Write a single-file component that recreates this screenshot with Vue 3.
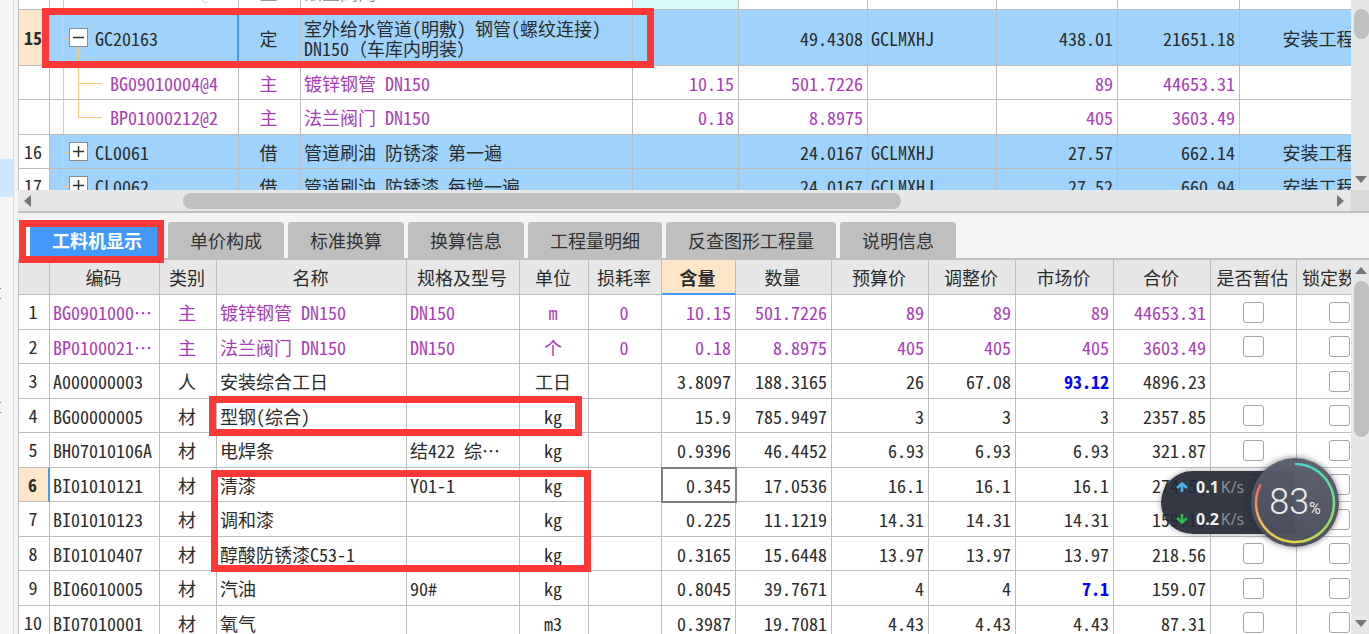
<script setup>
const quotaRows = [
  { no: '', kind: 'muted', level: 1, code: 'BP01000212@1', type: '主', name: ['法兰阀门 DN150'], content: '0', qty: '0', expr: '', price: '405', total: '0', fee: '' },
  { no: '15', kind: 'parent current', level: 0, sign: 'minus', code: 'GC20163', type: '定', name: ['室外给水管道(明敷) 钢管(螺纹连接)', 'DN150（车库内明装）'], content: '', qty: '49.4308', expr: 'GCLMXHJ', price: '438.01', total: '21651.18', fee: '安装工程' },
  { no: '', kind: 'material', level: 1, code: 'BG09010004@4', type: '主', name: ['镀锌钢管 DN150'], content: '10.15', qty: '501.7226', expr: '', price: '89', total: '44653.31', fee: '' },
  { no: '', kind: 'material last', level: 1, code: 'BP01000212@2', type: '主', name: ['法兰阀门 DN150'], content: '0.18', qty: '8.8975', expr: '', price: '405', total: '3603.49', fee: '' },
  { no: '16', kind: 'parent', level: 0, sign: 'plus', code: 'CL0061', type: '借', name: ['管道刷油 防锈漆 第一遍'], content: '', qty: '24.0167', expr: 'GCLMXHJ', price: '27.57', total: '662.14', fee: '安装工程' },
  { no: '17', kind: 'parent', level: 0, sign: 'plus', code: 'CL0062', type: '借', name: ['管道刷油 防锈漆 每增一遍'], content: '', qty: '24.0167', expr: 'GCLMXHJ', price: '27.52', total: '660.94', fee: '安装工程' },
]

const tabs = ['工料机显示', '单价构成', '标准换算', '换算信息', '工程量明细', '反查图形工程量', '说明信息']

const headers = ['', '编码', '类别', '名称', '规格及型号', '单位', '损耗率', '含量', '数量', '预算价', '调整价', '市场价', '合价', '是否暂估', '锁定数量']

const resources = [
  ['BG0901000⋯', '主', '镀锌钢管 DN150', 'DN150', 'm', '0', '10.15', '501.7226', '89', '89', '89', '44653.31'],
  ['BP0100021⋯', '主', '法兰阀门 DN150', 'DN150', '个', '0', '0.18', '8.8975', '405', '405', '405', '3603.49'],
  ['A000000003', '人', '安装综合工日', '', '工日', '', '3.8097', '188.3165', '26', '67.08', '93.12', '4896.23'],
  ['BG00000005', '材', '型钢(综合)', '', 'kg', '', '15.9', '785.9497', '3', '3', '3', '2357.85'],
  ['BH07010106A', '材', '电焊条', '结422 综⋯', 'kg', '', '0.9396', '46.4452', '6.93', '6.93', '6.93', '321.87'],
  ['BI01010121', '材', '清漆', 'Y01-1', 'kg', '', '0.345', '17.0536', '16.1', '16.1', '16.1', '274.56'],
  ['BI01010123', '材', '调和漆', '', 'kg', '', '0.225', '11.1219', '14.31', '14.31', '14.31', '159.15'],
  ['BI01010407', '材', '醇酸防锈漆C53-1', '', 'kg', '', '0.3165', '15.6448', '13.97', '13.97', '13.97', '218.56'],
  ['BI06010005', '材', '汽油', '90#', 'kg', '', '0.8045', '39.7671', '4', '4', '7.1', '159.07'],
  ['BI07010001', '材', '氧气', '', 'm3', '', '0.3987', '19.7081', '4.43', '4.43', '4.43', '87.31'],
]

const alignOf = (i) => ([1, 4, 5].includes(i) ? 'c' : i > 5 ? 'r' : 'l')
const edited = (r, i) => i === 10 && (r[0] === 'A000000003' || r[0] === 'BI06010005')

// Full-width brackets and the ellipsis keep their full cell, everything else Latin is half width
const runs = (text) => text.split(/([（）⋯])/).filter(Boolean).map((s) => ({ s, wide: /[（）⋯]/.test(s) }))

const stops = [[72, 214, 205], [90, 222, 160], [150, 220, 100], [228, 216, 72], [250, 190, 80], [250, 100, 90]]
const SEG = 40
const arcs = Array.from({ length: SEG }, (_, i) => {
  const sweep = 298
  const at = (deg) => {
    const a = (deg - 90) * Math.PI / 180
    return (45 + 39 * Math.cos(a)).toFixed(2) + ' ' + (45 + 39 * Math.sin(a)).toFixed(2)
  }
  const t = i / (SEG - 1) * (stops.length - 1)
  const k = Math.min(Math.floor(t), stops.length - 2)
  const c = stops[k].map((v, n) => Math.round(v + (stops[k + 1][n] - v) * (t - k)))
  return { d: `M${at(i * sweep / SEG)} A39 39 0 0 1 ${at((i + 1) * sweep / SEG + 0.5)}`, stroke: `rgb(${c.join(',')})` }
})
</script>

<template>
  <div class="app" lang="zh-CN">
    <aside class="rail">
      <i class="picked"></i>
      <i class="tick first"></i>
      <i class="tick second"></i>
    </aside>
    <main class="main">
      <section class="pane top-pane">
        <div class="viewport">
          <table class="grid quota">
            <colgroup>
              <col class="w31"><col class="w189"><col class="w62"><col><col class="w106"><col class="w129"><col class="w129"><col class="w121"><col class="w122"><col class="w160">
            </colgroup>
            <tbody>
              <tr v-for="(r, i) in quotaRows" :key="i" :class="r.kind">
                <td class="num">{{ r.no }}</td>
                <td class="code" :class="r.level ? 'child' : 'root'">
                  <i class="trunk"></i>
                  <i class="stem"></i>
                  <button v-if="r.sign" class="toggle" type="button" :aria-label="r.sign === 'plus' ? '展开' : '折叠'">
                    <svg width="19" height="19" viewBox="0 0 19 19">
                      <path d="M4 9.5H15" />
                      <path v-if="r.sign === 'plus'" d="M9.5 4V15" />
                    </svg>
                  </button>{{ r.code }}
                </td>
                <td class="c">{{ r.type }}</td>
                <td class="l">
                  <div v-for="n in r.name" :key="n"><span v-for="(p, k) in runs(n)" :key="k" :class="{ wide: p.wide }">{{ p.s }}</span></div>
                </td>
                <td class="r content">{{ r.content }}</td>
                <td class="r">{{ r.qty }}</td>
                <td class="l">{{ r.expr }}</td>
                <td class="r">{{ r.price }}</td>
                <td class="r">{{ r.total }}</td>
                <td class="c">{{ r.fee }}</td>
              </tr>
            </tbody>
          </table>
        </div>
        <div class="vbar">
          <i class="thumb upper"></i>
          <svg class="arrow" width="12" height="7" viewBox="0 0 12 7"><path d="M0 0H12L6 7Z" /></svg>
        </div>
      </section>

      <div class="hbar">
        <svg width="7" height="12" viewBox="0 0 7 12"><path d="M7 0V12L0 6Z" /></svg>
        <div class="htrack"><i class="hthumb"></i></div>
        <svg width="7" height="12" viewBox="0 0 7 12"><path d="M0 0V12L7 6Z" /></svg>
        <i class="corner"></i>
      </div>

      <nav class="tabs" role="tablist">
        <button v-for="(t, i) in tabs" :key="t" type="button" role="tab" class="tab" :class="{ active: i === 0 }" :aria-selected="i === 0">{{ t }}</button>
      </nav>

      <section class="pane bottom-pane">
        <div class="viewport">
          <table class="grid res">
            <colgroup>
              <col class="w31"><col class="w110"><col class="w57"><col><col class="w113"><col class="w69"><col class="w73"><col class="w74"><col class="w96"><col class="w97"><col class="w87"><col class="w98"><col class="w97"><col class="w86"><col class="w85">
            </colgroup>
            <thead>
              <tr><th v-for="(h, i) in headers" :key="i" :class="{ hot: h === '含量' }">{{ h }}</th></tr>
            </thead>
            <tbody>
              <tr v-for="(r, n) in resources" :key="n" :class="{ material: n < 2 }">
                <td class="num" :class="{ now: n === 5 }">{{ n + 1 }}</td>
                <td v-for="(v, i) in r" :key="i" :class="[alignOf(i), { edited: edited(r, i), focus: n === 5 && i === 6 }]"><span v-for="(p, k) in runs(v)" :key="k" :class="{ wide: p.wide }">{{ p.s }}</span></td>
                <td class="check"><input v-if="n !== 2" type="checkbox" :aria-label="'是否暂估 ' + (n + 1)"></td>
                <td class="check"><input type="checkbox" :aria-label="'锁定数量 ' + (n + 1)"></td>
              </tr>
            </tbody>
          </table>
        </div>
        <div class="vbar">
          <svg class="arrow" width="12" height="7" viewBox="0 0 12 7"><path d="M0 7H12L6 0Z" /></svg>
          <i class="thumb lower"></i>
          <svg class="arrow" width="12" height="7" viewBox="0 0 12 7"><path d="M0 0H12L6 7Z" /></svg>
        </div>
      </section>
    </main>

    <i class="mark m1"></i>
    <i class="mark m2"></i>
    <i class="mark m3"></i>
    <i class="mark m4"></i>

    <div class="speed">
      <div class="pill">
        <p>
          <svg width="12" height="10" viewBox="0 0 12 10" stroke="#4ab4f4"><path d="M6 10V2M1 6L6 1.5L11 6" /></svg>
          <b>0.1</b><span>K/s</span>
        </p>
        <p>
          <svg width="12" height="10" viewBox="0 0 12 10" stroke="#2db84b"><path d="M6 0V8M1 4L6 8.5L11 4" /></svg>
          <b>0.2</b><span>K/s</span>
        </p>
      </div>
      <div class="dial">
        <svg class="ring" width="90" height="90" viewBox="0 0 90 90">
          <path v-for="(a, i) in arcs" :key="i" :d="a.d" :stroke="a.stroke" />
        </svg>
        <span class="value">83</span><span class="unit">%</span>
      </div>
    </div>
  </div>
</template>

<style>
body { margin: 0; overflow: hidden; }
</style>

<style scoped>
.app {
  position: relative;
  display: flex;
  height: 100vh;
  overflow: hidden;
  background: #f4f4f4;
  color: #2b2b2b;
  font-family: "Noto Sans CJK SC", "Liberation Mono", sans-serif;
  font-size: 18px;
  line-height: 20px;
}
i { display: block; }
button { font: inherit; color: inherit; border: 0; padding: 0; }

.rail {
  position: relative;
  flex: none;
  box-sizing: border-box;
  width: 14px;
  margin-right: 4px;
  border-right: 1px solid #dadada;
}
.picked { margin-top: 159px; height: 38px; background: #cce8ff; }
.tick { width: 1px; height: 9px; border: solid #4a90d9; border-width: 1px 0; }
.tick.first { margin-top: 91px; }
.tick.second { margin-top: 103px; }

.main { flex: 1; min-width: 0; display: flex; flex-direction: column; }
.pane { display: flex; min-height: 0; }
.top-pane { flex: 0 0 30vh; }
.bottom-pane { flex: 1; }
.viewport {
  flex: 1;
  min-width: 0;
  overflow: hidden;
  border-left: 1px solid #bdbdbd;
  background: #fff;
}

.grid { table-layout: fixed; border-collapse: separate; border-spacing: 0; font-feature-settings: "hwid"; }
.wide { font-feature-settings: normal; }
.quota { width: calc(100% + 49px); margin-top: -25px; }
.res { width: calc(100% + 31px); }
.w31 { width: 31px; } .w57 { width: 57px; } .w62 { width: 62px; } .w69 { width: 69px; }
.w73 { width: 73px; } .w74 { width: 74px; } .w85 { width: 85px; } .w86 { width: 86px; }
.w87 { width: 87px; } .w96 { width: 96px; } .w97 { width: 97px; } .w98 { width: 98px; }
.w106 { width: 106px; } .w110 { width: 110px; } .w113 { width: 113px; } .w121 { width: 121px; }
.w122 { width: 122px; } .w129 { width: 129px; } .w160 { width: 160px; } .w189 { width: 189px; }

td, th {
  box-sizing: border-box;
  height: 35px;
  padding: 0 3px;
  border: solid #bdbdbd;
  border-width: 0 1px 1px 0;
  white-space: nowrap;
  overflow: hidden;
  vertical-align: middle;
  font-weight: 400;
}
tbody tr:nth-child(even) td { height: 34px; }
.quota tr:nth-child(odd) td { height: 34px; }
.quota tr:nth-child(1) td { height: 35px; }
.quota tr:nth-child(4) td { height: 35px; }
.quota tr:nth-child(2) td { height: 56px; }
.l { text-align: left; }
.c { text-align: center; padding: 0 3px 0 1px; }
.r { text-align: right; padding-right: 4px; }
.num { text-align: center; padding: 0 2px 2px 0; background: #fff; }
th { background: #e7e7e7; padding: 0 2px 0 0; text-align: center; }
th.hot { background: #ffe6c8; font-weight: 700; border-bottom: 2px solid #4499ff; }

.material td { color: #a83cba; }
.material td.num { color: #2b2b2b; }
.muted td { color: #999; }
.muted .code { color: #ddd; }
.muted .content { background: #d9f8f8; }
.parent td { background: #a0d3fb; }
.parent td.num { background: #fff; }
.current td.num, td.now { background: #ffe6c8; font-weight: 700; }
.current .code { border-right: 2px solid #4499ff; }
td.now { border-right: 2px solid #4499ff; }
td.edited { color: #00f; font-weight: 700; }
td.focus { outline: 2px solid #808080; outline-offset: -1px; }

.code { position: relative; }
.code.root { padding-left: 45px; }
.code.child { padding-left: 60px; }
.trunk { position: absolute; left: 13px; top: 0; bottom: -1px; width: 1px; background: #ffc878; }
.root .trunk { background: #f4c688; }
.stem { position: absolute; left: 28px; top: 0; bottom: -1px; width: 1px; background: #ffc878; }
.current .stem { top: 50%; }
.last .stem { bottom: 50%; }
.muted .stem, .parent:not(.current) .stem { display: none; }
.code::after { content: ""; position: absolute; top: 50%; height: 1px; background: #ffc878; }
.root::after { left: 13px; width: 6px; }
.child::after { left: 28px; width: 24px; }
.toggle {
  position: absolute;
  left: 19px;
  top: 0;
  bottom: 0;
  margin: auto 0;
  width: 19px;
  height: 19px;
  background: #fff;
  outline: 1px solid #8c8c8c;
  outline-offset: -1px;
}
.toggle svg { display: block; fill: none; stroke: #333; stroke-width: 1.5; }

.check { text-align: center; padding: 0; }
.check input {
  display: block;
  appearance: none;
  box-sizing: border-box;
  width: 21px;
  height: 21px;
  margin: 0 auto;
  border: 1px solid #a6a6a6;
  border-radius: 3px;
  background: #fff;
}

.vbar {
  flex: none;
  box-sizing: border-box;
  width: 18px;
  padding: 7px 0 7px 3px;
  background: #e7e7e7;
  display: flex;
  flex-direction: column;
}
.vbar .arrow { flex: none; margin-left: 1px; }
.vbar .arrow:last-child { margin-top: auto; }
svg { flex: none; display: block; }
.arrow, .hbar svg { fill: #74747c; }
.thumb { width: 15px; border-radius: 8px; background: #bfbfbf; }
.thumb.upper { height: 30px; margin-top: 2px; }
.thumb.lower { height: 156px; margin-top: 7px; }

.hbar {
  flex: none;
  display: flex;
  align-items: center;
  height: 21px;
  padding-left: 6px;
  background: #e7e7e7;
  border-bottom: 2px solid #bfbfbf;
}
.htrack { flex: 1; }
.hthumb { width: 55%; height: 16px; margin-left: 152px; border-radius: 8px; background: #bfbfbf; }
.corner { width: 18px; height: 21px; margin-left: 7px; background: #d9d9d9; }

.tabs {
  flex: none;
  display: flex;
  gap: 4px;
  padding: 9px 0 0 8px;
  border-bottom: 2px solid #bfbfbf;
}
.tab { height: 36px; padding: 0 22px; border-radius: 3px 3px 0 0; background: #bfbfbf; color: #333; }
.tab.active { background: #4499ff; color: #fff; font-weight: 700; border-left: 4px solid #fff; }

.mark { position: absolute; box-sizing: border-box; border: 7px solid #fd3938; pointer-events: none; }
.m1 { left: 42px; top: 8px; width: 612px; height: 60px; }
.m2 { left: 19px; top: 220px; width: 145px; height: 43px; }
.m3 { left: 209px; top: 396px; width: 373px; height: 40px; }
.m4 { left: 211px; top: 470px; width: 380px; height: 102px; }

.speed { position: absolute; right: 30px; top: 458px; display: flex; align-items: center; }
.pill {
  box-sizing: border-box;
  width: 134px;
  height: 63px;
  margin-right: -44px;
  padding-left: 15px;
  border-radius: 32px 0 0 32px;
  background: rgba(36, 40, 52, 0.92);
  box-shadow: 0 0 6px rgba(40, 40, 60, 0.4);
  display: flex;
  flex-direction: column;
  justify-content: center;
  gap: 12px;
}
.pill p { display: flex; align-items: center; margin: 0; font: 16px/20px "Open Sans", sans-serif; color: #8d919c; }
.pill svg { margin-right: 8px; fill: none; stroke-width: 2.5; }
.pill b { color: #f0f0f0; margin-right: 2px; }
.dial {
  position: relative;
  display: flex;
  justify-content: center;
  align-items: baseline;
  width: 88px;
  height: 89px;
  border-radius: 50%;
  background: linear-gradient(rgba(88, 93, 109, 0.97), rgba(72, 76, 91, 0.97));
  box-shadow: 0 0 6px rgba(30, 30, 50, 0.6);
  color: #ececec;
  font-family: Roboto, sans-serif;
  line-height: 88px;
}
.ring { position: absolute; left: -1px; top: 0; fill: none; stroke-width: 2.5; }
.value { font-size: 36px; font-weight: 300; }
.unit { font-size: 16px; }
</style>
